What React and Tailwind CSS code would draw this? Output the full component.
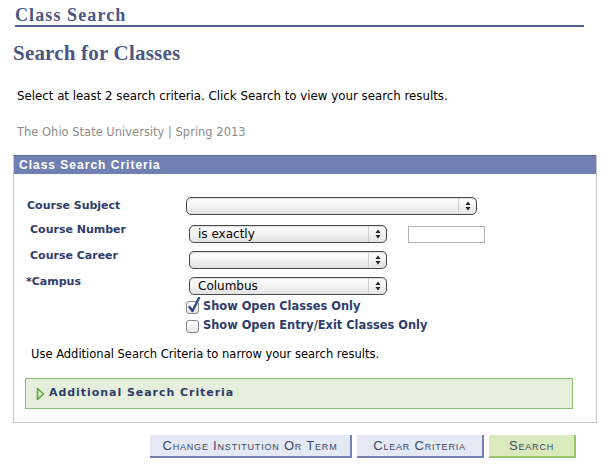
import React from "react";

const navy = "text-[#2f3d6b]";

function Select({ width, value }) {
  return (
    <div
      className="h-[18px] rounded-[5px] border border-[#4a4a4a] flex items-stretch bg-gradient-to-b from-white via-[#f3f3f3] to-[#e2e2e2] shadow-[inset_0_1px_1px_rgba(0,0,0,0.15)]"
      style={{ width }}
    >
      <div className="flex-1 pl-[8px] text-[12px] leading-[16px] text-black font-['DejaVu_Sans',sans-serif]">
        {value}
      </div>
      <div className="w-[18px] border-l border-[#cfcfcf] flex flex-col items-center justify-center">
        <svg width="6" height="10" viewBox="0 0 6 10">
          <path d="M3 0.5 L5.5 4 L0.5 4 Z" fill="#222" />
          <path d="M3 9.5 L5.5 6 L0.5 6 Z" fill="#222" />
        </svg>
      </div>
    </div>
  );
}

function Checkbox({ checked }) {
  return (
    <div className="relative w-[13px] h-[13px] rounded-[3px] border border-[#8a8a8a] bg-gradient-to-b from-white to-[#e6e6e6]">
      {checked && (
        <svg
          className="absolute left-[0px] top-[-5px]"
          width="14"
          height="17"
          viewBox="0 0 14 17"
        >
          <path
            d="M2.5 10 L5.5 14 L12 1"
            stroke="#2c4c8c"
            strokeWidth="2.4"
            fill="none"
            strokeLinecap="round"
            strokeLinejoin="round"
          />
        </svg>
      )}
    </div>
  );
}

export default function App() {
  return (
    <div className="w-[607px] h-[468px] bg-white overflow-hidden font-['DejaVu_Sans',sans-serif]">
      <div className="pl-[15px] pt-[5px] h-[25px] text-[18px] leading-[20px] font-bold tracking-[1.1px] text-[#4a5784] font-['Liberation_Serif',serif]">
        Class Search
      </div>
      <div className="ml-[15px] w-[569px] h-[2px] bg-[#53618a]" />
      <div className="pl-[13px] pt-[14px] h-[37px] text-[21px] leading-[24px] font-bold tracking-[0.2px] text-[#4a5784] font-['Liberation_Serif',serif]">
        Search for Classes
      </div>
      <div className="pl-[17px] pt-[24px] text-[11.8px] leading-[16px] text-black">
        Select at least 2 search criteria. Click Search to view your search results.
      </div>
      <div className="pl-[17px] pt-[20px] text-[11.5px] leading-[16px] text-[#8c8c8c]">
        The Ohio State University | Spring 2013
      </div>

      {/* criteria box */}
      <div className="ml-[13px] mt-[15px] w-[584px] h-[268px] border border-[#c6c6c6] border-t-0">
        <div className="h-[19px] bg-[#7080b3] border-t border-[#5b6a9e] pl-[5px] text-[12px] leading-[18px] font-bold text-white tracking-[1px] font-['Liberation_Sans',sans-serif]">
          Class Search Criteria
        </div>

        <div className="flex items-center mt-[23px] h-[18px]">
          <div className={`w-[172px] pl-[13px] text-[11px] font-bold ${navy}`}>Course Subject</div>
          <Select width={291} value="" />
        </div>
        <div className="flex items-center mt-[10px] h-[18px]">
          <div className={`w-[175px] pl-[16px] text-[11px] font-bold ${navy} -mt-[8px]`}>Course Number</div>
          <Select width={198} value="is exactly" />
          <div className="ml-[21px] w-[77px] h-[17px] border border-[#b5b5b5] bg-white" />
        </div>
        <div className="flex items-center mt-[8px] h-[18px]">
          <div className={`w-[175px] pl-[16px] text-[11px] font-bold ${navy} -mt-[8px]`}>Course Career</div>
          <Select width={198} value="" />
        </div>
        <div className="flex items-center mt-[8px] h-[18px]">
          <div className={`w-[175px] pl-[12px] text-[11px] font-bold ${navy} -mt-[8px]`}>*Campus</div>
          <Select width={198} value="Columbus" />
        </div>
        <div className="flex items-center mt-[5px] h-[14px] pl-[172px]">
          <Checkbox checked />
          <div className={`ml-[4px] text-[11.4px] font-bold ${navy}`}>Show Open Classes Only</div>
        </div>
        <div className="flex items-center mt-[5px] h-[14px] pl-[172px]">
          <Checkbox />
          <div className={`ml-[4px] text-[11.4px] font-bold ${navy}`}>Show Open Entry/Exit Classes Only</div>
        </div>
        <div className="pl-[17px] mt-[13px] text-[11.5px] leading-[16px] text-black">
          Use Additional Search Criteria to narrow your search results.
        </div>
        <div className="ml-[11px] mt-[16px] w-[548px] h-[31px] bg-[#e6efdc] border border-[#8cbd72] flex items-center pl-[10px]">
          <svg width="9" height="14" viewBox="0 0 9 14">
            <path d="M1.5 1.5 L7.5 7 L1.5 12.5 Z" fill="#d8ecc8" stroke="#5fa83e" strokeWidth="1.6" strokeLinejoin="round" />
          </svg>
          <div className={`ml-[4px] text-[11px] font-bold tracking-[0.95px] ${navy}`}>Additional Search Criteria</div>
        </div>
      </div>

      {/* buttons */}
      <div className="flex mt-[12px] pl-[150px] gap-[5px] font-['Liberation_Sans',sans-serif]">
        <div className="w-[202px] h-[23px] bg-[#e5e9f3] border-r-2 border-b-2 border-[#7383b4] flex items-center justify-center text-[13px] tracking-[0.8px] text-[#3a4868] [font-variant:small-caps]">
          Change Institution Or Term
        </div>
        <div className="w-[127px] h-[23px] bg-[#e5e9f3] border-r-2 border-b-2 border-[#7383b4] flex items-center justify-center text-[13px] tracking-[0.8px] text-[#3a4868] [font-variant:small-caps]">
          Clear Criteria
        </div>
        <div className="w-[87px] h-[23px] bg-[#dbeabd] border-r-2 border-b-2 border-[#98c46e] flex items-center justify-center text-[13px] tracking-[0.8px] text-[#3a4868] [font-variant:small-caps]">
          Search
        </div>
      </div>
    </div>
  );
}
